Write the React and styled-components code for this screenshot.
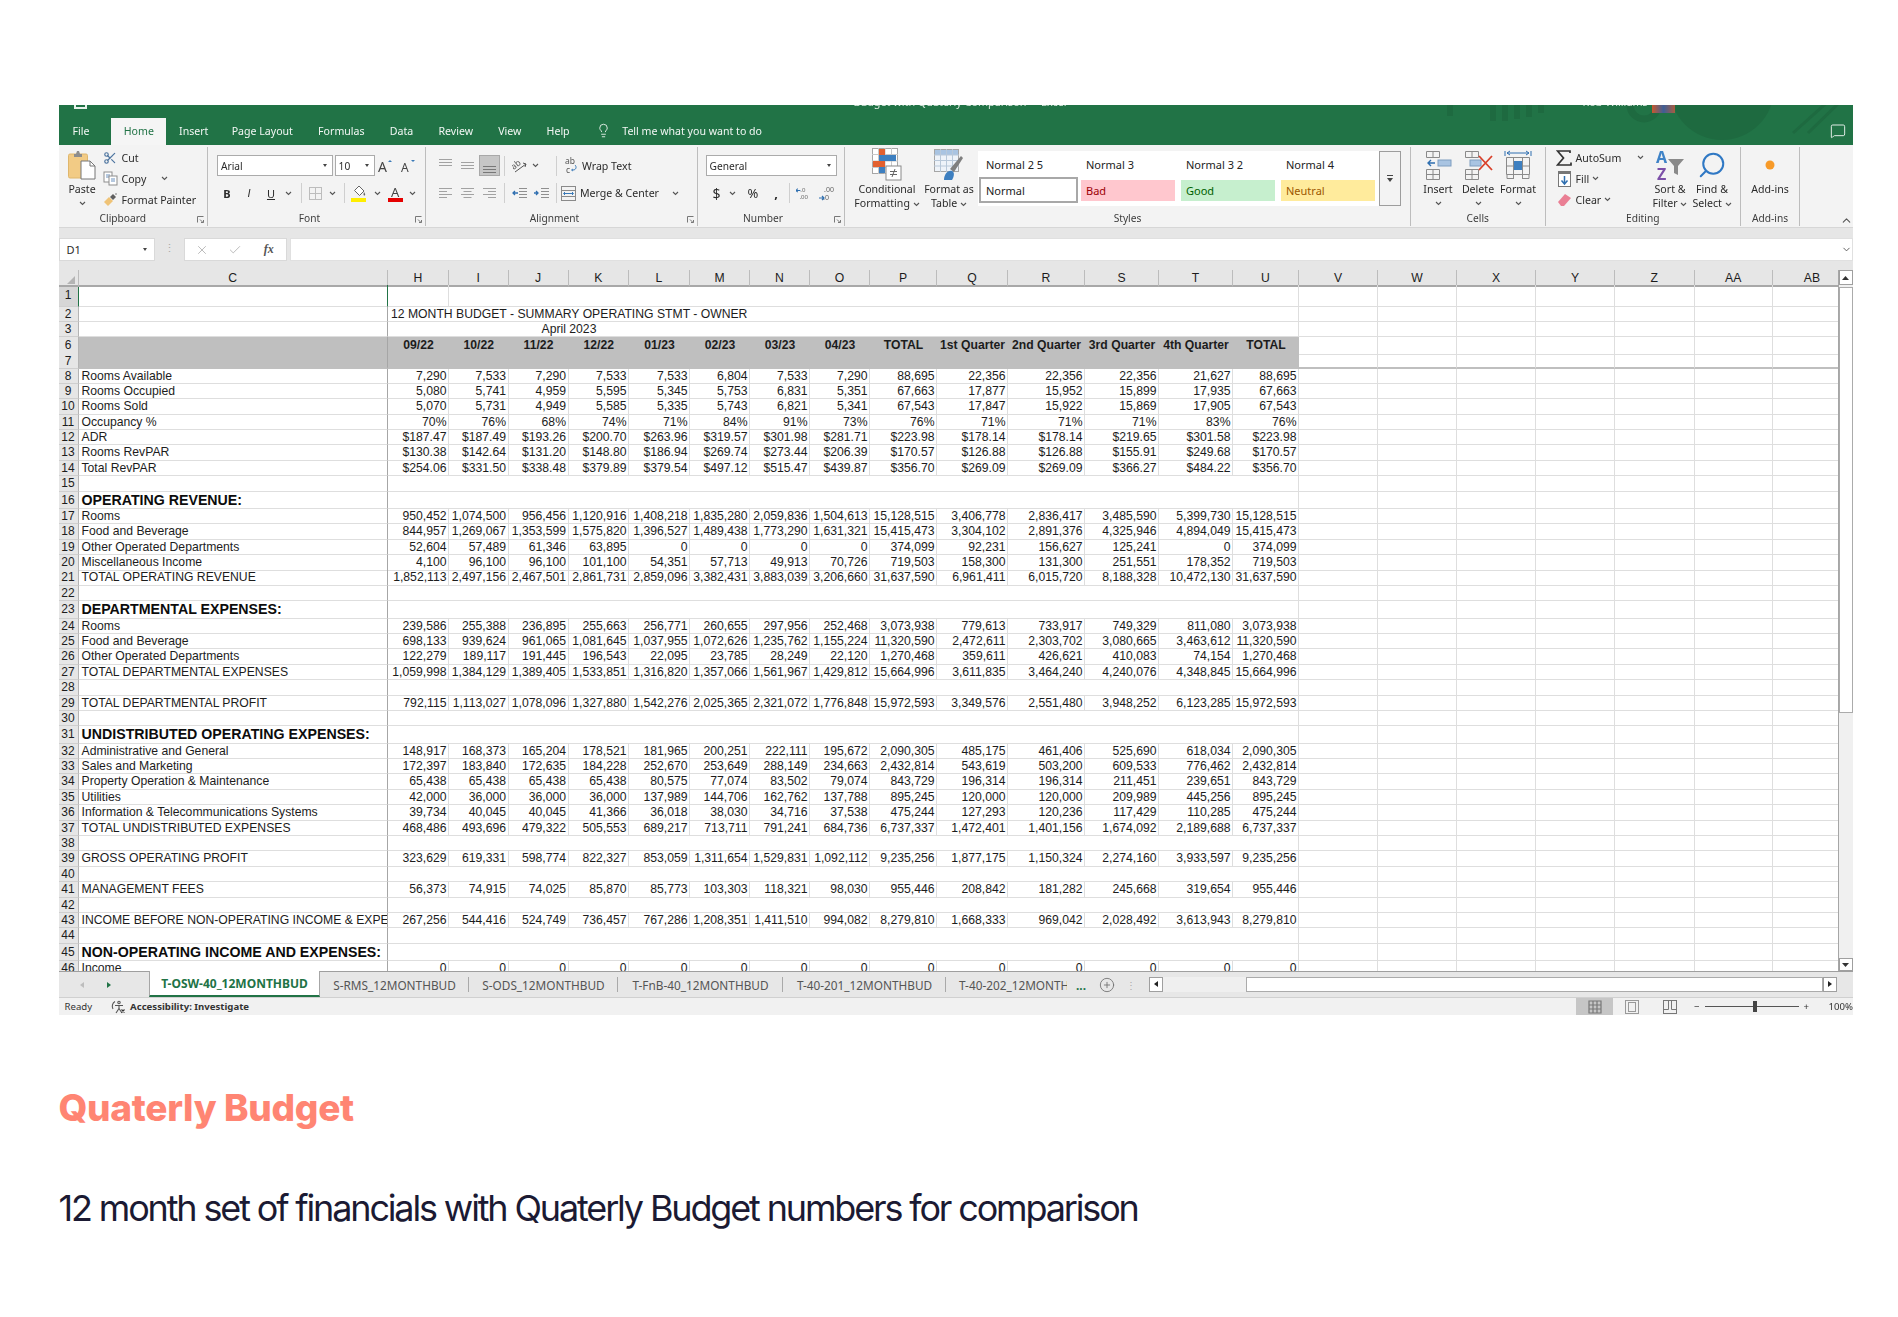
import React from "react";
import styled, { createGlobalStyle } from "styled-components";
import { Lightbulb, MessageSquare, Scissors, Search, X, Check, CirclePlus, ChevronUp, ChevronDown } from "lucide-react";

const GlobalStyle = createGlobalStyle`
  html, body { margin: 0; padding: 0; background: #fff; }
  body { font-family: "Noto Sans", "Liberation Sans", sans-serif; }
`;

const ui = `"Noto Sans", "Open Sans", sans-serif`;
const arial = `"Liberation Sans", Arial, sans-serif`;
const colWidths = "20px 309.5px 61px 59.5px 60px 60.5px 61px 60px 60px 60px 67px 71px 77px 74px 74px 66px 79px 79px 79px 79px 79.5px 78.5px 79px";

const Page = styled.div`
  width: 1898px;
  height: 1317px;
  overflow: hidden;
  padding: 105px 45px 0 58.5px;
  box-sizing: border-box;
  background: #fff;
`;
const Window = styled.div`
  display: flex;
  flex-direction: column;
  height: 910px;
  color: #2b2b2b;
  font-family: ${ui};
  filter: blur(0.35px);
`;

/* title bar + tab strip */
const GreenHead = styled.div`
  position: relative;
  height: 40px;
  flex: none;
  background: #217346;
  overflow: hidden;
`;
const Pattern = styled.svg`
  position: absolute;
  top: 0;
  right: 0;
`;
const TitleBar = styled.div`
  position: relative;
  display: flex;
  align-items: flex-end;
  height: 13px;
  padding-bottom: 9px;
  box-sizing: border-box;
  color: #d8e8de;
  font-size: 10.8px;
  line-height: 14px;
  white-space: pre;
`;
const SaveMark = styled.div`
  width: 13px;
  height: 14px;
  margin-left: 15px;
  margin-right: 767px;
  border: 2px solid #e8f2ec;
  box-sizing: border-box;
  flex: none;
`;
const DocTitle = styled.span`
  width: 210px;
  margin-right: 519px;
  text-align: center;
  flex: none;
`;
const UserName = styled.span`
  width: 70px;
  flex: none;
`;
const Avatar = styled.div`
  position: absolute;
  left: 1593px;
  top: 0;
  width: 23px;
  height: 8px;
  background: linear-gradient(90deg, #c8582c, #3f5f97 50%, #a95c3f);
`;
const TabStrip = styled.div`
  position: relative;
  display: flex;
  height: 27px;
  align-items: stretch;
  padding-left: 1.5px;
`;
const RibbonTab = styled.div`
  display: flex;
  align-items: center;
  padding: 0 12.6px 2px;
  margin-left: ${(p) => p.$ml || 0}px;
  font-size: 10.6px;
  color: ${(p) => (p.$active ? "#217346" : "#f2f7f4")};
  background: ${(p) => (p.$active ? "#f5f5f5" : "transparent")};
`;
const TellMe = styled.div`
  display: flex;
  align-items: center;
  gap: 11px;
  margin-left: 14px;
  padding-bottom: 2px;
  font-size: 10.6px;
  color: #f2f7f4;
`;
const CommentBtn = styled.div`
  position: absolute;
  right: 7px;
  top: 5px;
  display: flex;
`;

/* ribbon */
const Ribbon = styled.div`
  position: relative;
  display: flex;
  height: 83px;
  flex: none;
  padding-top: 2px;
  box-sizing: border-box;
  background: #f3f3f3;
  border-bottom: 1px solid #d6d6d6;
  font-size: 10.6px;
  color: #2b2b2b;
  white-space: nowrap;
`;
const Group = styled.div`
  position: relative;
  display: flex;
  flex-direction: column;
  flex: none;
  width: ${(p) => p.$w}px;
  height: 79px;
  box-sizing: border-box;
  border-right: 1.5px solid #bdbdbd;
`;
const GroupBody = styled.div`
  display: flex;
  height: 66px;
  padding-left: ${(p) => p.$pad || 0}px;
`;
const GroupLabel = styled.div`
  height: 15px;
  line-height: 15px;
  text-align: center;
  font-size: 10.2px;
  color: #3d3d3d;
  padding-right: ${(p) => p.$pr || 0}px;
`;
const Launcher = styled.svg`
  position: absolute;
  right: 3px;
  bottom: 3px;
`;
const Stack = styled.div`
  display: flex;
  flex-direction: column;
  width: ${(p) => p.$w}px;
  margin-left: ${(p) => p.$ml || 0}px;
  flex: none;
`;
const StackRow = styled.div`
  display: flex;
  align-items: center;
  height: 21px;
  gap: 3px;
`;
const StackIcon = styled.div`
  display: flex;
  justify-content: center;
  width: 17px;
  flex: none;
`;
const StackChev = styled.div`
  display: flex;
  margin-left: ${(p) => p.$ml || 0}px;
`;
const BigBtn = styled.div`
  display: flex;
  flex-direction: column;
  align-items: center;
  flex: none;
  width: ${(p) => p.$w}px;
  text-align: center;
  line-height: 14px;
`;
const BigIcon = styled.div`
  display: flex;
  align-items: center;
  justify-content: center;
  height: 35px;
`;
const BigChev = styled.div`
  display: flex;
  margin-top: 5px;
`;
const ToolRows = styled.div`
  display: flex;
  flex-direction: column;
  gap: 6.5px;
  padding-top: 8px;
`;
const ToolRow = styled.div`
  display: flex;
  align-items: center;
  height: 21px;
`;
const ToolCell = styled.div`
  display: flex;
  align-items: center;
  justify-content: center;
  flex: none;
  width: ${(p) => p.$w}px;
  height: 21px;
  font-family: ${(p) => (p.$arial ? arial : "inherit")};
  font-weight: ${(p) => (p.$bold ? 700 : 400)};
  font-style: ${(p) => (p.$italic ? "italic" : "normal")};
  font-size: ${(p) => p.$size || 11}px;
  background: ${(p) => (p.$active ? "#c6c6c6" : "transparent")};
  box-shadow: ${(p) => (p.$active ? "inset 0 0 0 1px #a8a8a8" : "none")};
`;
const ToolSep = styled.div`
  width: 1px;
  height: 20px;
  margin: 0 ${(p) => p.$r || p.$m || 4}px 0 ${(p) => p.$m || 4}px;
  background: #cfcfcf;
  flex: none;
`;
const ToolText = styled.span`
  margin-left: ${(p) => p.$ml || 0}px;
`;
const ComboBox = styled.div`
  display: flex;
  align-items: center;
  justify-content: space-between;
  width: ${(p) => p.$w}px;
  height: 21px;
  box-sizing: border-box;
  margin-right: ${(p) => p.$mr || 0}px;
  padding: 0 5px 0 3px;
  background: #fff;
  border: 1px solid #ababab;
  font-size: 10.2px;
  flex: none;
`;
const DownTri = styled.span`
  width: 0;
  height: 0;
  border-left: 2.5px solid transparent;
  border-right: 2.5px solid transparent;
  border-top: 3px solid #444;
`;
const Gallery = styled.div`
  display: grid;
  grid-template-columns: repeat(4, 100px);
  grid-template-rows: 26px 29px;
  width: 401px;
  height: 55px;
  margin: 4px 0 0 -1px;
  padding-left: 1px;
  box-sizing: border-box;
  background: #fff;
  flex: none;
`;
const StyleName = styled.div`
  display: flex;
  align-items: center;
  padding-left: 7px;
  font-size: 11px;
  color: #222;
`;
const StyleCell = styled.div`
  display: flex;
  align-items: center;
  margin: ${(p) => (p.$boxed ? "0 1px 3px 0" : "3px 4px 5px 2px")};
  padding-left: 5px;
  font-size: 11px;
  background: ${(p) => p.$bg};
  color: ${(p) => p.$fg};
  border: ${(p) => (p.$boxed ? "2px solid #a8a8a8" : "none")};
`;
const GalleryMore = styled.div`
  display: flex;
  align-items: center;
  justify-content: center;
  width: 22px;
  height: 55px;
  margin-top: 4px;
  box-sizing: border-box;
  border: 1px solid #9d9d9d;
  background: #f3f3f3;
  flex: none;
`;
const Collapse = styled.div`
  position: absolute;
  right: 0;
  bottom: 0;
  display: flex;
`;

/* formula bar */
const FormulaBand = styled.div`
  position: relative;
  display: flex;
  height: 42px;
  flex: none;
  padding-top: 10px;
  box-sizing: border-box;
  background: #e6e6e6;
`;
const NameBox = styled.div`
  display: flex;
  align-items: center;
  justify-content: space-between;
  width: 96.5px;
  height: 23px;
  padding: 0 7px;
  box-sizing: border-box;
  background: #fff;
  border: 1px solid #d9d9d9;
  font-size: 11px;
`;
const FxDots = styled.div`
  width: 29px;
  height: 23px;
  text-align: center;
  line-height: 20px;
  font-size: 11px;
  color: #a9a9a9;
`;
const FxBox = styled.div`
  display: flex;
  align-items: center;
  width: 102.5px;
  height: 23px;
  box-sizing: border-box;
  background: #fff;
  border: 1px solid #d9d9d9;
  margin-right: 3px;
`;
const FxCell = styled.div`
  display: flex;
  justify-content: center;
  width: 34px;
  color: #a7a7a7;
`;
const FxLabel = styled.span`
  font-family: "Liberation Serif", serif;
  font-style: italic;
  font-weight: 700;
  font-size: 12px;
  color: #555;
`;
const FormulaInput = styled.div`
  flex: 1;
  height: 23px;
  background: #fff;
  border: 1px solid #e0e0e0;
  box-sizing: border-box;
`;
const FormulaChev = styled.div`
  position: absolute;
  right: 1px;
  top: 16px;
  display: flex;
`;

/* sheet */
const SheetWrap = styled.div`
  display: flex;
  height: 702px;
  flex: none;
  overflow: hidden;
  background: #fff;
  border-bottom: 1px solid #9f9f9f;
  box-sizing: border-box;
`;
const SheetArea = styled.div`
  width: 1780.2px;
  flex: none;
  overflow: hidden;
  font-family: ${arial};
  font-size: 12.2px;
  color: #1c1c1c;
  border-right: 1px solid #a6a6a6;
  box-sizing: border-box;
`;
const SheetRow = styled.div`
  display: grid;
  grid-template-columns: ${colWidths};
  height: ${(p) => p.$h}px;
  line-height: ${(p) => p.$lh || p.$h - 1}px;
  white-space: nowrap;
`;
const ColHead = styled.div`
  height: 15px;
  line-height: 16px;
  text-align: center;
  background: #e6e6e6;
  border-right: 1px solid #bcbcbc;
  border-bottom: 2px solid #a8a8a8;
  box-sizing: content-box;
  color: #1c1c1c;
`;
const HeadRow = styled(SheetRow)`
  height: 15px;
`;
const Corner = styled.div`
  position: relative;
  background: #e6e6e6;
  border-bottom: 2px solid #a8a8a8;
  border-right: 1px solid #bcbcbc;
  height: 15px;
  &::after {
    content: "";
    position: absolute;
    right: 3px;
    bottom: 1px;
    border-left: 8px solid transparent;
    border-bottom: 8px solid #b4b4b4;
  }
`;
const RowNum = styled.div`
  text-align: center;
  font-size: 12px;
  color: #1c1c1c;
  background: ${(p) => (p.$sel ? "#d6d6d6" : "#e6e6e6")};
  border-right: 1px solid ${(p) => (p.$sel ? "#217346" : "#b4b4b4")};
  border-bottom: 1px solid #cfcfcf;
  box-sizing: border-box;
`;
const Cell = styled.div`
  box-sizing: border-box;
  padding: 0 1.5px 0 ${(p) => (p.$align === "left" ? 3 : 1.5)}px;
  overflow: ${(p) => (p.$clip ? "hidden" : "visible")};
  text-align: ${(p) => p.$align || "right"};
  font-weight: ${(p) => (p.$bold ? 700 : 400)};
  font-size: ${(p) => (p.$section ? "14.2px" : "inherit")};
  color: ${(p) => (p.$section ? "#0c0c0c" : "inherit")};
  background: ${(p) => (p.$gray ? "#bfbfbf" : "transparent")};
  border-bottom: ${(p) => (p.$rule ? "2px solid #bfbfbf" : p.$gray ? "none" : "1px solid #dedede")};
  border-right: ${(p) => (p.$strong ? "1px solid #a6a6a6" : p.$noline ? "none" : "1px solid #dedede")};
  ${(p) => (p.$span ? `grid-column: span ${p.$span};` : "")}
`;
const GreenTick = styled(Cell)`
  border-right: 1px solid #217346;
`;
const VScroll = styled.div`
  display: flex;
  flex-direction: column;
  flex: 1;
  background: #f0f0f0;
`;
const ScrollBtn = styled.div`
  display: flex;
  align-items: center;
  justify-content: center;
  height: ${(p) => p.$h || 13}px;
  background: #fff;
  border: 1px solid #9f9f9f;
  box-sizing: border-box;
  flex: none;
`;
const VThumb = styled.div`
  height: 426px;
  margin-top: 2px;
  background: #fff;
  border: 1px solid #ababab;
  box-sizing: border-box;
`;
const VSpace = styled.div`
  flex: 1;
`;

/* sheet tabs */
const TabsBar = styled.div`
  display: flex;
  height: 26px;
  flex: none;
  align-items: stretch;
  background: #e7e7e7;
  font-size: 11.8px;
  color: #555;
  white-space: nowrap;
  border-bottom: 1px solid #d0d0d0;
  box-sizing: border-box;
`;
const TabNav = styled.div`
  display: flex;
  align-items: center;
  width: 90.5px;
  padding-left: 21px;
  gap: 23px;
  box-sizing: border-box;
`;
const NavTri = styled.span`
  width: 0;
  height: 0;
  border-top: 3px solid transparent;
  border-bottom: 3px solid transparent;
  ${(p) => {
    const c = p.$dark ? "#222" : p.$left ? "#bdbdbd" : "#217346";
    return p.$left ? `border-right: 4px solid ${c};` : `border-left: 4px solid ${c};`;
  }}
`;
const ActiveTab = styled.div`
  display: flex;
  align-items: center;
  justify-content: center;
  width: 171px;
  margin-top: -1px;
  background: #fff;
  color: #217346;
  font-size: 12px;
  font-weight: 700;
  border: 1px solid #a6a6a6;
  border-top: 0;
  border-bottom: 2px solid #217346;
  box-sizing: border-box;
`;
const SheetTab = styled.div`
  display: flex;
  align-items: center;
  justify-content: ${(p) => (p.$clip ? "flex-start" : "center")};
  width: ${(p) => p.$w}px;
  padding-left: ${(p) => (p.$clip ? 13 : 0)}px;
  overflow: hidden;
  box-sizing: border-box;
  flex: none;
  position: relative;
  &::after {
    content: "";
    display: ${(p) => (p.$clip ? "none" : "block")};
    position: absolute;
    right: 0;
    top: 5px;
    bottom: 5px;
    width: 1px;
    background: #a9a9a9;
  }
`;
const MoreTabs = styled.div`
  display: flex;
  align-items: center;
  margin-left: 9px;
  width: 20px;
  font-weight: 700;
  color: #217346;
`;
const AddSheet = styled.div`
  display: flex;
  align-items: center;
  margin-left: 3px;
  color: #707070;
`;
const TabDots = styled.div`
  display: flex;
  align-items: center;
  justify-content: center;
  width: 26px;
  margin: 0 5px 0 3px;
  color: #aaa;
  font-size: 10px;
`;
const HScroll = styled.div`
  display: flex;
  align-items: center;
  flex: none;
  width: 688px;
  padding-bottom: 1px;
`;
const HBtn = styled.div`
  display: flex;
  align-items: center;
  justify-content: center;
  width: 14px;
  height: 15px;
  background: #fff;
  border: 1px solid #9f9f9f;
  box-sizing: border-box;
  flex: none;
`;
const HTrack = styled.div`
  width: 83px;
  height: 15px;
  background: #efefef;
  flex: none;
`;
const HThumb = styled.div`
  flex: 1;
  height: 15px;
  background: #fff;
  border: 1px solid #ababab;
  box-sizing: border-box;
`;

/* status bar */
const StatusBar = styled.div`
  display: flex;
  align-items: center;
  height: 17px;
  flex: none;
  background: #f1f1f1;
  font-size: 9.6px;
  color: #333;
`;
const StatusText = styled.span`
  display: ${(p) => (p.$icon ? "flex" : "inline")};
  margin-left: ${(p) => p.$ml || 0}px;
  font-weight: ${(p) => (p.$bold ? 700 : 400)};
`;
const StatusSpace = styled.div`
  flex: 1;
`;
const ViewBtn = styled.div`
  display: flex;
  align-items: center;
  justify-content: center;
  width: ${(p) => (p.$active ? 37 : 38)}px;
  height: 17px;
  background: ${(p) => (p.$active ? "#c6c6c6" : "transparent")};
`;
const ZoomSlider = styled.div`
  position: relative;
  width: 94px;
  height: 1px;
  margin: 0 5px;
  background: #555;
  &::after {
    content: "";
    position: absolute;
    left: 48px;
    top: -5px;
    width: 4px;
    height: 11px;
    background: #444;
  }
`;

/* caption */
const Caption = styled.div`
  padding-top: 72px;
`;
const Heading = styled.h2`
  margin: 0;
  font-family: Inter, sans-serif;
  font-weight: 800;
  font-size: 37px;
  line-height: 42px;
  letter-spacing: -0.3px;
  color: #ff8573;
`;
const Lead = styled.p`
  margin: 56px 0 0;
  font-family: Inter, sans-serif;
  font-weight: 400;
  font-size: 36px;
  line-height: 46px;
  letter-spacing: -2.15px;
  color: #1b1a33;
`;

/* icons */
const Chev = ({ c = "#555" }) => (
  <svg width="7" height="5" viewBox="0 0 7 5"><path d="M1 1l2.5 2.5L6 1" stroke={c} fill="none" strokeWidth="1.1" /></svg>
);
const Lines = ({ mode, active }) => {
  const rows = { top: [2, 5, 8], mid: [5, 8, 11], bot: [9, 12, 15] }[mode];
  const horizontal = { left: [[1, 14], [1, 9], [1, 14], [1, 9]], center: [[1, 14], [3.5, 11.5], [1, 14], [3.5, 11.5]], right: [[1, 14], [6, 14], [1, 14], [6, 14]] }[mode];
  const stroke = active ? "#777" : "#a2a2a2";
  if (horizontal) {
    return (
      <svg width="15" height="14" viewBox="0 0 15 14">
        {horizontal.map(([a, b], i) => <path key={i} d={`M${a} ${2.5 + i * 3}H${b}`} stroke={stroke} />)}
      </svg>
    );
  }
  return (
    <svg width="15" height="17" viewBox="0 0 15 17">
      {rows.map((y) => <path key={y} d={`M1 ${y + 0.5}H14`} stroke={stroke} />)}
    </svg>
  );
};
const PasteIcon = () => (
  <svg width="28" height="30" viewBox="0 0 28 30">
    <rect x="0.5" y="4" width="19" height="24" rx="1.5" fill="#f2cb85" stroke="#dfb66c" />
    <path d="M6 4h2l1-3h2l1 3h2v3H6z" fill="#8d8d8d" />
    <path d="M13 11h9l5 5v13H13z" fill="#fff" stroke="#777" />
    <path d="M22 11v5h5" fill="none" stroke="#777" />
  </svg>
);
const CopyIcon = () => (
  <svg width="15" height="15" viewBox="0 0 15 15">
    <rect x="1" y="1" width="8" height="10" fill="#fff" stroke="#8d8d8d" />
    <path d="M3 4h4M3 6h4" stroke="#6c92bf" />
    <rect x="6" y="5" width="8" height="9" fill="#fff" stroke="#8d8d8d" />
    <path d="M8 8h4M8 10h4" stroke="#6c92bf" />
  </svg>
);
const PainterIcon = () => (
  <svg width="15" height="14" viewBox="0 0 15 14">
    <path d="M1 9l5-5 4 4-5 5z" fill="#efc377" />
    <path d="M7 4l3-3 3 3-3 3z" fill="#5f5f5f" />
    <path d="M12 1l2 0" stroke="#7b7b7b" />
  </svg>
);
const GrowFont = ({ up }) => (
  <svg width="16" height="16" viewBox="0 0 16 16">
    <text x="0" y="14" fontFamily="Noto Sans" fontSize={up ? 14 : 12} fill="#444">A</text>
    <path d={up ? "M10 4l2-2 2 2z" : "M10 2l2 2 2-2z"} fill="#3a7ab8" />
  </svg>
);
const BorderIcon = () => (
  <svg width="13" height="13" viewBox="0 0 13 13" fill="none" stroke="#bdbdbd">
    <rect x="0.5" y="0.5" width="12" height="12" />
    <path d="M6.5 0v13M0 6.5h13" />
  </svg>
);
const FillIcon = () => (
  <svg width="16" height="17" viewBox="0 0 16 17">
    <path d="M8 1l5 5-4.500 4.500-5-5z" fill="#fff" stroke="#666" />
    <path d="M13 7c1 1.500 1.500 2.500 1 3.200-.6.6-1.600 0-1.500-1z" fill="#666" />
    <rect x="0" y="13" width="15" height="4" fill="#ffee00" />
  </svg>
);
const FontColor = () => (
  <svg width="16" height="17" viewBox="0 0 16 17">
    <text x="3" y="12" fontFamily="Noto Sans" fontSize="13" fill="#444">A</text>
    <rect x="0" y="13" width="15" height="4" fill="#e50000" />
  </svg>
);
const OrientIcon = () => (
  <svg width="17" height="16" viewBox="0 0 17 16">
    <text x="0" y="9" transform="rotate(-40 5 8)" fontFamily="Noto Sans" fontSize="8.500" fill="#555">ab</text>
    <path d="M3 14L14 6M11 5l3 1-1 3" fill="none" stroke="#555" />
  </svg>
);
const WrapIcon = () => (
  <svg width="13" height="17" viewBox="0 0 13 17">
    <text x="0" y="7" fontFamily="Noto Sans" fontSize="8.500" fill="#555">ab</text>
    <text x="1" y="16" fontFamily="Noto Sans" fontSize="8.500" fill="#555">c</text>
    <path d="M10 8c2 2 1 5-2 5M8 12l-1.500 1 1.500 1" fill="none" stroke="#3a7ab8" />
  </svg>
);
const IndentIcon = ({ dir }) => (
  <svg width="15" height="13" viewBox="0 0 15 13">
    <path d="M7 1.500H15M7 4.500H15M7 7.500H15M7 10.500H15" stroke="#8f8f8f" />
    <path d={dir === "in" ? "M0 6h4M2 4l2 2-2 2" : "M1 6h5M3 4l-2 2 2 2"} fill="none" stroke="#2f6fb0" strokeWidth="1.300" />
  </svg>
);
const MergeIcon = () => (
  <svg width="15" height="15" viewBox="0 0 15 15" fill="none" stroke="#8a8a8a">
    <rect x="0.5" y="0.5" width="14" height="14" />
    <path d="M0 4.500h15M0 10.500h15" />
    <path d="M3 7.500h9M4 6l-1.500 1.500L4 9M11 6l1.500 1.500L11 9" stroke="#3a7ab8" />
  </svg>
);
const DecimalIcon = ({ more }) => (
  <svg width="15" height="17" viewBox="0 0 15 17">
    <text x="5" y="7" fontFamily="Noto Sans" fontSize="7" fill="#666">{more ? ".0" : ".00"}</text>
    <text x="4" y="15" fontFamily="Noto Sans" fontSize="7" fill="#666">{more ? ".00" : ".0"}</text>
    <path d={more ? "M0 5h5M2 3L0 5l2 2" : "M0 13h5M3 11l2 2-2 2"} fill="none" stroke="#2f6fb0" strokeWidth="1.200" />
  </svg>
);
const CondFormatIcon = () => (
  <svg width="30" height="33" viewBox="0 0 30 33">
    <rect x="0.5" y="0.5" width="25" height="25" fill="#fff" stroke="#a6a6a6" />
    <path d="M6.5 0v26M13 0v26M19.500 0v26M0 6.500h26M0 13h26M0 19.500h26" stroke="#c8c8c8" />
    <rect x="7" y="1" width="6" height="6" fill="#e2602f" />
    <rect x="7" y="7" width="17" height="6" fill="#3d7fc0" />
    <rect x="1" y="13" width="12" height="6" fill="#e2602f" />
    <rect x="7" y="19" width="6" height="6" fill="#3d7fc0" />
    <rect x="14" y="18" width="15" height="14" fill="#fff" stroke="#8a8a8a" />
    <path d="M18 23.500h7M18 26.500h7M23 21l-3 8" stroke="#666" />
  </svg>
);
const TableIcon = () => (
  <svg width="30" height="32" viewBox="0 0 30 32">
    <rect x="0.5" y="0.5" width="24" height="22" fill="#eef3f9" stroke="#a6a6a6" />
    <rect x="1" y="1" width="23" height="5" fill="#a9c4e2" />
    <path d="M6.500 0v23M12.500 0v23M18.500 0v23M0 6h25M0 11.500h25M0 17h25" stroke="#b8c8d9" />
    <path d="M16 20L27 7l2 2-9 14z" fill="#7f7f7f" />
    <path d="M10 31c0-6 4-10 8-9 3 1 2 6 0 9z" fill="#3d7fc0" />
  </svg>
);
const InsertIcon = () => (
  <svg width="27" height="30" viewBox="0 0 27 30" fill="none" stroke="#8a8a8a">
    <path d="M1.500 1.500h13v6h-13zM8 1.500v6" />
    <path d="M1.500 19.500h13v10h-13zM8 19.500v10M1.500 24.500h13" />
    <rect x="13" y="10" width="13" height="6" fill="#a9c4e2" stroke="#7f9ec0" />
    <path d="M3 13h7M6 10l-3 3 3 3" stroke="#2f6fb0" strokeWidth="1.400" />
  </svg>
);
const DeleteIcon = () => (
  <svg width="29" height="30" viewBox="0 0 29 30" fill="none" stroke="#8a8a8a">
    <path d="M1.500 1.500h13v6h-13zM8 1.500v6" />
    <path d="M1.500 19.500h13v10h-13zM8 19.500v10M1.500 24.500h13" />
    <rect x="6" y="10" width="11" height="6" fill="#a9c4e2" stroke="#7f9ec0" />
    <path d="M15 6l13 14M28 6L15 20" stroke="#d9402a" strokeWidth="1.800" />
  </svg>
);
const FormatIcon = () => (
  <svg width="28" height="32" viewBox="0 0 28 32" fill="none" stroke="#8a8a8a">
    <path d="M1 2v5M27 2v5M3 4h22M6 2L3 4l3 2M22 2l3 2-3 2" stroke="#2f6fb0" />
    <path d="M2.500 8.500h23v17h-23zM9.500 8v22M18.500 8v22M2 17h24M3 25.500v4h6M19 29.500h6v-4" />
    <rect x="10" y="12" width="8" height="9" fill="#3d7fc0" stroke="none" />
  </svg>
);
const SigmaIcon = () => (
  <svg width="16" height="16" viewBox="0 0 16 16"><path d="M14 3V1H1.500l6 7-6 7H15v-2.500" fill="none" stroke="#333" strokeWidth="1.700" /></svg>
);
const FillDown = () => (
  <svg width="13" height="16" viewBox="0 0 13 16">
    <rect x="0.500" y="0.500" width="12" height="15" fill="#fff" stroke="#777" />
    <rect x="0" y="0" width="13" height="3" fill="#777" />
    <path d="M6.500 5v8M3.500 9.500l3 3.500 3-3.500" fill="none" stroke="#2f6fb0" strokeWidth="1.500" />
  </svg>
);
const EraserIcon = () => (
  <svg width="13" height="12" viewBox="0 0 13 12"><path d="M0 8l7-8 6 4-7 8H3z" fill="#ea7f94" /></svg>
);
const SortIcon = () => (
  <svg width="30" height="33" viewBox="0 0 30 33">
    <text x="1" y="15" fontFamily="Noto Sans" fontWeight="700" fontSize="16" fill="#3f83c7">A</text>
    <text x="2" y="32" fontFamily="Noto Sans" fontWeight="700" fontSize="16" fill="#7c4fa8">Z</text>
    <path d="M13 11h16l-6 7v9l-4-2v-7z" fill="#8a8a8a" />
  </svg>
);
const Launch = () => (
  <Launcher width="7" height="7" viewBox="0 0 7 7" fill="none" stroke="#777">
    <path d="M0.500 6.500v-6h6M3 3.500l3 3M6.500 4v2.500H4" />
  </Launcher>
);
const GridIcon = () => (
  <svg width="14" height="14" viewBox="0 0 14 14" fill="none" stroke="#777" strokeWidth="1.200">
    <path d="M1 .5v13M5 .5v13M9 .5v13M13 .5v13M.5 1h13M.5 5h13M.5 9h13M.5 13h13" />
  </svg>
);
const PageIcon = () => (
  <svg width="14" height="14" viewBox="0 0 14 14" fill="none" stroke="#999"><rect x="0.500" y="0.500" width="13" height="13" /><rect x="3.500" y="2.500" width="7" height="9" /></svg>
);
const BreakIcon = () => (
  <svg width="14" height="14" viewBox="0 0 14 14" fill="none" stroke="#777"><rect x="0.500" y="0.500" width="13" height="13" /><path d="M.5 9.500h5v-9M8.500 .5v9h5" /></svg>
);
const AccessIcon = () => (
  <svg width="15" height="14" viewBox="0 0 15 14" fill="none" stroke="#555" strokeWidth="1.100">
    <path d="M4 1.500A5.500 5.500 0 0 0 2 9" />
    <circle cx="8" cy="2.500" r="1.200" />
    <path d="M4 5.500h8M8 5.500v3M8 8.500l-3 4.500M8 8.500l3 4.500" />
    <path d="M10.500 9.500l3 3M13.500 9.500l-3 3" stroke="#333" />
  </svg>
);

/* data */
const months = ["09/22", "10/22", "11/22", "12/22", "01/23", "02/23", "03/23", "04/23", "TOTAL", "1st Quarter", "2nd Quarter", "3rd Quarter", "4th Quarter", "TOTAL"];
const colNames = ["C", "H", "I", "J", "K", "L", "M", "N", "O", "P", "Q", "R", "S", "T", "U", "V", "W", "X", "Y", "Z", "AA", "AB"];
const rowH = 15.4;

const sheet = [
  { n: 8, label: "Rooms Available", v: "7,290 7,533 7,290 7,533 7,533 6,804 7,533 7,290 88,695 22,356 22,356 22,356 21,627 88,695" },
  { n: 9, label: "Rooms Occupied", v: "5,080 5,741 4,959 5,595 5,345 5,753 6,831 5,351 67,663 17,877 15,952 15,899 17,935 67,663" },
  { n: 10, label: "Rooms Sold", v: "5,070 5,731 4,949 5,585 5,335 5,743 6,821 5,341 67,543 17,847 15,922 15,869 17,905 67,543" },
  { n: 11, label: "Occupancy %", v: "70% 76% 68% 74% 71% 84% 91% 73% 76% 71% 71% 71% 83% 76%" },
  { n: 12, label: "ADR", v: "$187.47 $187.49 $193.26 $200.70 $263.96 $319.57 $301.98 $281.71 $223.98 $178.14 $178.14 $219.65 $301.58 $223.98" },
  { n: 13, label: "Rooms RevPAR", v: "$130.38 $142.64 $131.20 $148.80 $186.94 $269.74 $273.44 $206.39 $170.57 $126.88 $126.88 $155.91 $249.68 $170.57" },
  { n: 14, label: "Total RevPAR", v: "$254.06 $331.50 $338.48 $379.89 $379.54 $497.12 $515.47 $439.87 $356.70 $269.09 $269.09 $366.27 $484.22 $356.70" },
  { n: 15 },
  { n: 16, label: "OPERATING REVENUE:", section: true },
  { n: 17, label: "Rooms", v: "950,452 1,074,500 956,456 1,120,916 1,408,218 1,835,280 2,059,836 1,504,613 15,128,515 3,406,778 2,836,417 3,485,590 5,399,730 15,128,515" },
  { n: 18, label: "Food and Beverage", v: "844,957 1,269,067 1,353,599 1,575,820 1,396,527 1,489,438 1,773,290 1,631,321 15,415,473 3,304,102 2,891,376 4,325,946 4,894,049 15,415,473" },
  { n: 19, label: "Other Operated Departments", v: "52,604 57,489 61,346 63,895 0 0 0 0 374,099 92,231 156,627 125,241 0 374,099" },
  { n: 20, label: "Miscellaneous Income", v: "4,100 96,100 96,100 101,100 54,351 57,713 49,913 70,726 719,503 158,300 131,300 251,551 178,352 719,503" },
  { n: 21, label: "TOTAL OPERATING REVENUE", v: "1,852,113 2,497,156 2,467,501 2,861,731 2,859,096 3,382,431 3,883,039 3,206,660 31,637,590 6,961,411 6,015,720 8,188,328 10,472,130 31,637,590" },
  { n: 22 },
  { n: 23, label: "DEPARTMENTAL EXPENSES:", section: true },
  { n: 24, label: "Rooms", v: "239,586 255,388 236,895 255,663 256,771 260,655 297,956 252,468 3,073,938 779,613 733,917 749,329 811,080 3,073,938" },
  { n: 25, label: "Food and Beverage", v: "698,133 939,624 961,065 1,081,645 1,037,955 1,072,626 1,235,762 1,155,224 11,320,590 2,472,611 2,303,702 3,080,665 3,463,612 11,320,590" },
  { n: 26, label: "Other Operated Departments", v: "122,279 189,117 191,445 196,543 22,095 23,785 28,249 22,120 1,270,468 359,611 426,621 410,083 74,154 1,270,468" },
  { n: 27, label: "TOTAL DEPARTMENTAL EXPENSES", v: "1,059,998 1,384,129 1,389,405 1,533,851 1,316,820 1,357,066 1,561,967 1,429,812 15,664,996 3,611,835 3,464,240 4,240,076 4,348,845 15,664,996" },
  { n: 28 },
  { n: 29, label: "TOTAL DEPARTMENTAL PROFIT", v: "792,115 1,113,027 1,078,096 1,327,880 1,542,276 2,025,365 2,321,072 1,776,848 15,972,593 3,349,576 2,551,480 3,948,252 6,123,285 15,972,593" },
  { n: 30 },
  { n: 31, label: "UNDISTRIBUTED OPERATING EXPENSES:", section: true },
  { n: 32, label: "Administrative and General", v: "148,917 168,373 165,204 178,521 181,965 200,251 222,111 195,672 2,090,305 485,175 461,406 525,690 618,034 2,090,305" },
  { n: 33, label: "Sales and Marketing", v: "172,397 183,840 172,635 184,228 252,670 253,649 288,149 234,663 2,432,814 543,619 503,200 609,533 776,462 2,432,814" },
  { n: 34, label: "Property Operation & Maintenance", v: "65,438 65,438 65,438 65,438 80,575 77,074 83,502 79,074 843,729 196,314 196,314 211,451 239,651 843,729" },
  { n: 35, label: "Utilities", v: "42,000 36,000 36,000 36,000 137,989 144,706 162,762 137,788 895,245 120,000 120,000 209,989 445,256 895,245" },
  { n: 36, label: "Information & Telecommunications Systems", v: "39,734 40,045 40,045 41,366 36,018 38,030 34,716 37,538 475,244 127,293 120,236 117,429 110,285 475,244" },
  { n: 37, label: "TOTAL UNDISTRIBUTED EXPENSES", v: "468,486 493,696 479,322 505,553 689,217 713,711 791,241 684,736 6,737,337 1,472,401 1,401,156 1,674,092 2,189,688 6,737,337" },
  { n: 38 },
  { n: 39, label: "GROSS OPERATING PROFIT", v: "323,629 619,331 598,774 822,327 853,059 1,311,654 1,529,831 1,092,112 9,235,256 1,877,175 1,150,324 2,274,160 3,933,597 9,235,256" },
  { n: 40 },
  { n: 41, label: "MANAGEMENT FEES", v: "56,373 74,915 74,025 85,870 85,773 103,303 118,321 98,030 955,446 208,842 181,282 245,668 319,654 955,446" },
  { n: 42 },
  { n: 43, label: "INCOME BEFORE NON-OPERATING INCOME & EXPE", v: "267,256 544,416 524,749 736,457 767,286 1,208,351 1,411,510 994,082 8,279,810 1,668,333 969,042 2,028,492 3,613,943 8,279,810" },
  { n: 44 },
  { n: 45, label: "NON-OPERATING INCOME AND EXPENSES:", section: true },
  { n: 46, label: "Income", v: "0 0 0 0 0 0 0 0 0 0 0 0 0 0" },
];

const BlankCols = ({ rule }) =>
  ["V", "W", "X", "Y", "Z", "AA", "AB"].map((c) => <Cell key={c} $rule={rule} />);

function DataRow({ row }) {
  const h = row.section ? 17.3 : rowH;
  const vals = row.v ? row.v.split(" ") : null;
  return (
    <SheetRow $h={h}>
      <RowNum>{row.n}</RowNum>
      <Cell $align="left" $strong $clip $bold={row.section} $section={row.section}>{row.label}</Cell>
      {vals ? vals.map((v, i) => <Cell key={i}>{v}</Cell>) : <Cell $span={14} />}
      <BlankCols />
    </SheetRow>
  );
}

function Sheet() {
  return (
    <SheetWrap>
      <SheetArea>
        <HeadRow $h={15}>
          <Corner />
          {colNames.map((c) => <ColHead key={c}>{c}</ColHead>)}
        </HeadRow>
        <SheetRow $h={22}>
          <RowNum $sel>1</RowNum>
          <GreenTick />
          <Cell />
          <Cell $span={13} />
          <BlankCols />
        </SheetRow>
        <SheetRow $h={15}>
          <RowNum>2</RowNum>
          <Cell $strong />
          <Cell $span={14} $align="left">12 MONTH BUDGET - SUMMARY OPERATING STMT - OWNER</Cell>
          <BlankCols />
        </SheetRow>
        <SheetRow $h={15}>
          <RowNum>3</RowNum>
          <Cell $strong />
          <Cell $span={6} $align="center" $noline>April 2023</Cell>
          <Cell $span={8} />
          <BlankCols />
        </SheetRow>
        <SheetRow $h={16.5} $lh={17}>
          <RowNum>6</RowNum>
          <Cell $gray $strong />
          {months.map((m, i) => <Cell key={i} $gray $bold $align="center" $noline>{m}</Cell>)}
          <BlankCols />
        </SheetRow>
        <SheetRow $h={15}>
          <RowNum>7</RowNum>
          <Cell $gray $strong $rule />
          <Cell $gray $span={14} $rule $noline />
          <BlankCols rule />
        </SheetRow>
        {sheet.map((row) => <DataRow key={row.n} row={row} />)}
      </SheetArea>
      <VScroll>
        <ScrollBtn $h={15}><svg width="7" height="4" viewBox="0 0 7 4"><path d="M3.500 0l3.500 4H0z" fill="#333" /></svg></ScrollBtn>
        <VThumb />
        <VSpace />
        <ScrollBtn><svg width="7" height="4" viewBox="0 0 7 4"><path d="M0 0h7L3.500 4z" fill="#333" /></svg></ScrollBtn>
      </VScroll>
    </SheetWrap>
  );
}

const tabsLeft = ["File", "Home", "Insert", "Page Layout", "Formulas", "Data", "Review", "View", "Help"];
const tabOffsets = { Home: 9, "Page Layout": -2 };

function RibbonBar() {
  return (
    <Ribbon>
      <Group $w={149.5}>
        <GroupBody $pad={7}>
          <BigBtn $w={33}>
            <BigIcon><PasteIcon /></BigIcon>
            <span>Paste</span>
            <BigChev><Chev /></BigChev>
          </BigBtn>
          <Stack $w={103} $ml={3}>
            <StackRow><StackIcon><Scissors size={14} color="#4d749f" /></StackIcon><span>Cut</span></StackRow>
            <StackRow><StackIcon><CopyIcon /></StackIcon><span>Copy</span><StackChev $ml={12}><Chev /></StackChev></StackRow>
            <StackRow><StackIcon><PainterIcon /></StackIcon><span>Format Painter</span></StackRow>
          </Stack>
        </GroupBody>
        <GroupLabel $pr={20}>Clipboard</GroupLabel>
        <Launch />
      </Group>

      <Group $w={218}>
        <GroupBody $pad={9}>
          <ToolRows>
            <ToolRow>
              <ComboBox $w={115.6} $mr={2}><span>Arial</span><DownTri /></ComboBox>
              <ComboBox $w={40.4}><span>10</span><DownTri /></ComboBox>
              <ToolCell $w={23}><GrowFont up /></ToolCell>
              <ToolCell $w={23}><GrowFont /></ToolCell>
            </ToolRow>
            <ToolRow>
              <ToolCell $w={20} $bold>B</ToolCell>
              <ToolCell $w={24} $italic $arial>I</ToolCell>
              <ToolCell $w={20}><u>U</u></ToolCell>
              <ToolCell $w={15.5}><Chev /></ToolCell>
              <ToolSep />
              <ToolCell $w={19}><BorderIcon /></ToolCell>
              <ToolCell $w={15}><Chev /></ToolCell>
              <ToolSep />
              <ToolCell $w={21}><FillIcon /></ToolCell>
              <ToolCell $w={16}><Chev /></ToolCell>
              <ToolCell $w={21}><FontColor /></ToolCell>
              <ToolCell $w={11}><Chev /></ToolCell>
            </ToolRow>
          </ToolRows>
        </GroupBody>
        <GroupLabel $pr={14}>Font</GroupLabel>
        <Launch />
      </Group>

      <Group $w={272}>
        <GroupBody $pad={9}>
          <ToolRows>
            <ToolRow>
              <ToolCell $w={20}><Lines mode="top" /></ToolCell>
              <ToolCell $w={24}><Lines mode="mid" /></ToolCell>
              <ToolCell $w={21} $active><Lines mode="bot" active /></ToolCell>
              <ToolSep />
              <ToolCell $w={22}><OrientIcon /></ToolCell>
              <ToolCell $w={8}><Chev /></ToolCell>
              <ToolSep $m={17} $r={4} />
              <ToolCell $w={20}><WrapIcon /></ToolCell>
              <ToolText $ml={1}>Wrap Text</ToolText>
            </ToolRow>
            <ToolRow>
              <ToolCell $w={20}><Lines mode="left" /></ToolCell>
              <ToolCell $w={24}><Lines mode="center" /></ToolCell>
              <ToolCell $w={21}><Lines mode="right" /></ToolCell>
              <ToolSep />
              <ToolCell $w={21}><IndentIcon dir="out" /></ToolCell>
              <ToolCell $w={23}><IndentIcon dir="in" /></ToolCell>
              <ToolSep $m={3} />
              <ToolCell $w={16}><MergeIcon /></ToolCell>
              <ToolText $ml={4}>Merge &amp; Center</ToolText>
              <ToolCell $w={32}><Chev /></ToolCell>
            </ToolRow>
          </ToolRows>
        </GroupBody>
        <GroupLabel $pr={14}>Alignment</GroupLabel>
        <Launch />
      </Group>

      <Group $w={147}>
        <GroupBody $pad={7.5}>
          <ToolRows>
            <ToolRow>
              <ComboBox $w={131.5}><span>General</span><DownTri /></ComboBox>
            </ToolRow>
            <ToolRow>
              <ToolCell $w={22} $size={14}>$</ToolCell>
              <ToolCell $w={9.5}><Chev /></ToolCell>
              <ToolCell $w={32} $size={13}>%</ToolCell>
              <ToolCell $w={14} $bold $size={13}>,</ToolCell>
              <ToolSep $m={6} />
              <ToolCell $w={13}><DecimalIcon more /></ToolCell>
              <ToolCell $w={34}><DecimalIcon /></ToolCell>
            </ToolRow>
          </ToolRows>
        </GroupBody>
        <GroupLabel $pr={16}>Number</GroupLabel>
        <Launch />
      </Group>

      <Group $w={566}>
        <GroupBody $pad={10}>
          <BigBtn $w={64}>
            <BigIcon><CondFormatIcon /></BigIcon>
            <span>Conditional</span>
            <span>Formatting <Chev /></span>
          </BigBtn>
          <BigBtn $w={60}>
            <BigIcon><TableIcon /></BigIcon>
            <span>Format as</span>
            <span>Table <Chev /></span>
          </BigBtn>
          <Gallery>
            <StyleName>Normal 2 5</StyleName>
            <StyleName>Normal 3</StyleName>
            <StyleName>Normal 3 2</StyleName>
            <StyleName>Normal 4</StyleName>
            <StyleCell $boxed $bg="#fff" $fg="#222">Normal</StyleCell>
            <StyleCell $bg="#ffc7ce" $fg="#9c0006">Bad</StyleCell>
            <StyleCell $bg="#c6efce" $fg="#006100">Good</StyleCell>
            <StyleCell $bg="#ffeb9c" $fg="#9c5700">Neutral</StyleCell>
          </Gallery>
          <GalleryMore>
            <svg width="8" height="8" viewBox="0 0 8 8"><path d="M1 .5h6" stroke="#444" /><path d="M1 3h6L4 7z" fill="#444" /></svg>
          </GalleryMore>
        </GroupBody>
        <GroupLabel>Styles</GroupLabel>
      </Group>

      <Group $w={134.5}>
        <GroupBody $pad={7}>
          <BigBtn $w={40}><BigIcon><InsertIcon /></BigIcon><span>Insert</span><BigChev><Chev /></BigChev></BigBtn>
          <BigBtn $w={40}><BigIcon><DeleteIcon /></BigIcon><span>Delete</span><BigChev><Chev /></BigChev></BigBtn>
          <BigBtn $w={40}><BigIcon><FormatIcon /></BigIcon><span>Format</span><BigChev><Chev /></BigChev></BigBtn>
        </GroupBody>
        <GroupLabel>Cells</GroupLabel>
      </Group>

      <Group $w={195.5}>
        <GroupBody $pad={10}>
          <Stack $w={90.5}>
            <StackRow><StackIcon><SigmaIcon /></StackIcon><span>AutoSum</span><StackChev $ml={13}><Chev /></StackChev></StackRow>
            <StackRow><StackIcon><FillDown /></StackIcon><span>Fill</span><Chev /></StackRow>
            <StackRow><StackIcon><EraserIcon /></StackIcon><span>Clear</span><Chev /></StackRow>
          </Stack>
          <BigBtn $w={48}><BigIcon><SortIcon /></BigIcon><span>Sort &amp;</span><span>Filter <Chev /></span></BigBtn>
          <BigBtn $w={36}>
            <BigIcon><Search size={30} color="#2f78c4" strokeWidth={1.6} style={{ transform: "scaleX(-1)" }} /></BigIcon>
            <span>Find &amp;</span><span>Select <Chev /></span>
          </BigBtn>
        </GroupBody>
        <GroupLabel>Editing</GroupLabel>
      </Group>

      <Group $w={59}>
        <GroupBody>
          <BigBtn $w={58}>
            <BigIcon><svg width="10" height="10" viewBox="0 0 10 10"><circle cx="5" cy="5" r="4.500" fill="#f79a28" /></svg></BigIcon>
            <span>Add-ins</span>
          </BigBtn>
        </GroupBody>
        <GroupLabel>Add-ins</GroupLabel>
      </Group>
      <Collapse><ChevronUp size={13} color="#555" /></Collapse>
    </Ribbon>
  );
}

export default function App() {
  return (
    <>
      <GlobalStyle />
      <Page>
        <Window>
          <GreenHead>
            <Pattern width="420" height="40" viewBox="0 0 420 40" fill="none" stroke="#1e6a40">
              <circle cx="289" cy="-17" r="52" fill="#1e6a40" stroke="none" />
              <circle cx="211" cy="0" r="14" strokeWidth="7" />
              <path d="M17 0v11M60 0v16M72 0v16M84 0v14M96 0v12M108 0v8" strokeWidth="6" />
              <path d="M360 28L400 -8M375 28L410 -6" strokeWidth="3" />
            </Pattern>
            <TitleBar>
              <SaveMark />
              <DocTitle>Budget with Quaterly Comparison  -  Excel</DocTitle>
              <UserName>Rob Williams</UserName>
              <Avatar />
            </TitleBar>
            <TabStrip>
              {tabsLeft.map((t) => <RibbonTab key={t} $active={t === "Home"} $ml={tabOffsets[t]}>{t}</RibbonTab>)}
              <TellMe>
                <Lightbulb size={15} strokeWidth={1.4} />
                <span>Tell me what you want to do</span>
              </TellMe>
              <CommentBtn><MessageSquare size={16} color="#fff" strokeWidth={1.3} /></CommentBtn>
            </TabStrip>
          </GreenHead>

          <RibbonBar />

          <FormulaBand>
            <NameBox><span>D1</span><DownTri /></NameBox>
            <FxDots>⋮</FxDots>
            <FxBox>
              <FxCell><X size={14} strokeWidth={1.3} /></FxCell>
              <FxCell><Check size={14} strokeWidth={1.3} /></FxCell>
              <FxCell><FxLabel>fx</FxLabel></FxCell>
            </FxBox>
            <FormulaInput />
            <FormulaChev><ChevronDown size={11} color="#555" /></FormulaChev>
          </FormulaBand>

          <Sheet />

          <TabsBar>
            <TabNav><NavTri $left /><NavTri /></TabNav>
            <ActiveTab>T-OSW-40_12MONTHBUD</ActiveTab>
            <SheetTab $w={149}>S-RMS_12MONTHBUD</SheetTab>
            <SheetTab $w={149}>S-ODS_12MONTHBUD</SheetTab>
            <SheetTab $w={165}>T-FnB-40_12MONTHBUD</SheetTab>
            <SheetTab $w={163}>T-40-201_12MONTHBUD</SheetTab>
            <SheetTab $w={121} $clip>T-40-202_12MONTHBUD</SheetTab>
            <MoreTabs>...</MoreTabs>
            <AddSheet><CirclePlus size={16} strokeWidth={1.3} /></AddSheet>
            <TabDots>⋮</TabDots>
            <HScroll>
              <HBtn><NavTri $left $dark /></HBtn>
              <HTrack />
              <HThumb />
              <HBtn><NavTri $dark /></HBtn>
            </HScroll>
          </TabsBar>

          <StatusBar>
            <StatusText $ml={6}>Ready</StatusText>
            <StatusText $ml={19} $icon><AccessIcon /></StatusText>
            <StatusText $ml={4} $bold>Accessibility: Investigate</StatusText>
            <StatusSpace />
            <ViewBtn $active><GridIcon /></ViewBtn>
            <ViewBtn><PageIcon /></ViewBtn>
            <ViewBtn><BreakIcon /></ViewBtn>
            <StatusText $ml={5}>−</StatusText>
            <ZoomSlider />
            <StatusText>+</StatusText>
            <StatusText $ml={19.5}>100%</StatusText>
          </StatusBar>
        </Window>

        <Caption>
          <Heading>Quaterly Budget</Heading>
          <Lead>12 month set of financials with Quaterly Budget numbers for comparison</Lead>
        </Caption>
      </Page>
    </>
  );
}
